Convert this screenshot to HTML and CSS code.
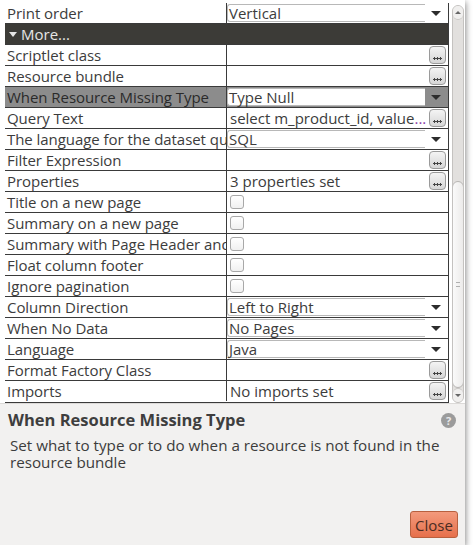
FILE: index.html
```html
<!DOCTYPE html>
<html>
<head>
<meta charset="utf-8">
<link rel="stylesheet" href="styles.css">
</head>
<body>
<div class="window">
  <div class="top">
    <div class="grid">
      <div class="row"><div class="label">Print order</div><div class="value combo"><div class="box">Vertical</div><div class="arrow"></div></div></div>
      <div class="row section"><div class="sec-label"><span class="tri"></span>More...</div></div>
      <div class="row"><div class="label">Scriptlet class</div><div class="value"><div class="text"></div><div class="dots"><svg width="9" height="4" viewBox="0 0 9 4"><path d="M0 2.5H9M1.5 1V4M4.5 1V4M7.5 1V4" stroke="#444" stroke-width="1"/></svg></div></div></div>
      <div class="row"><div class="label">Resource bundle</div><div class="value"><div class="text"></div><div class="dots"><svg width="9" height="4" viewBox="0 0 9 4"><path d="M0 2.5H9M1.5 1V4M4.5 1V4M7.5 1V4" stroke="#444" stroke-width="1"/></svg></div></div></div>
      <div class="row selected"><div class="label">When Resource Missing Type</div><div class="value combo"><div class="box">Type Null</div><div class="arrow"></div></div></div>
      <div class="row"><div class="label">Query Text</div><div class="value"><div class="text">select m_product_id, value<span class="ell">...</span></div><div class="dots"><svg width="9" height="4" viewBox="0 0 9 4"><path d="M0 2.5H9M1.5 1V4M4.5 1V4M7.5 1V4" stroke="#444" stroke-width="1"/></svg></div></div></div>
      <div class="row"><div class="label">The language for the dataset query</div><div class="value combo"><div class="box">SQL</div><div class="arrow"></div></div></div>
      <div class="row"><div class="label">Filter Expression</div><div class="value"><div class="text"></div><div class="dots"><svg width="9" height="4" viewBox="0 0 9 4"><path d="M0 2.5H9M1.5 1V4M4.5 1V4M7.5 1V4" stroke="#444" stroke-width="1"/></svg></div></div></div>
      <div class="row"><div class="label">Properties</div><div class="value"><div class="text">3 properties set</div><div class="dots"><svg width="9" height="4" viewBox="0 0 9 4"><path d="M0 2.5H9M1.5 1V4M4.5 1V4M7.5 1V4" stroke="#444" stroke-width="1"/></svg></div></div></div>
      <div class="row"><div class="label">Title on a new page</div><div class="value"><span class="check"></span></div></div>
      <div class="row"><div class="label">Summary on a new page</div><div class="value"><span class="check"></span></div></div>
      <div class="row"><div class="label">Summary with Page Header and Footer</div><div class="value"><span class="check"></span></div></div>
      <div class="row"><div class="label">Float column footer</div><div class="value"><span class="check"></span></div></div>
      <div class="row"><div class="label">Ignore pagination</div><div class="value"><span class="check"></span></div></div>
      <div class="row"><div class="label">Column Direction</div><div class="value combo"><div class="box">Left to Right</div><div class="arrow"></div></div></div>
      <div class="row"><div class="label">When No Data</div><div class="value combo"><div class="box">No Pages</div><div class="arrow"></div></div></div>
      <div class="row"><div class="label">Language</div><div class="value combo"><div class="box">Java</div><div class="arrow"></div></div></div>
      <div class="row"><div class="label">Format Factory Class</div><div class="value"><div class="text"></div><div class="dots"><svg width="9" height="4" viewBox="0 0 9 4"><path d="M0 2.5H9M1.5 1V4M4.5 1V4M7.5 1V4" stroke="#444" stroke-width="1"/></svg></div></div></div>
      <div class="row"><div class="label">Imports</div><div class="value"><div class="text">No imports set</div><div class="dots"><svg width="9" height="4" viewBox="0 0 9 4"><path d="M0 2.5H9M1.5 1V4M4.5 1V4M7.5 1V4" stroke="#444" stroke-width="1"/></svg></div></div></div>
    </div>
    <div class="scrollbar">
      <div class="sb-btn up"><span class="sb-tri-up"></span></div>
      <div class="sb-track">
        <div class="sb-thumb"><span class="grip"></span></div>
      </div>
      <div class="sb-btn down"><span class="sb-tri-down"></span></div>
    </div>
  </div>
  <div class="help">
    <div class="help-head">
      <div class="help-title">When Resource Missing Type</div>
      <div class="help-icon">?</div>
    </div>
    <div class="help-text">Set what to type or to do when a resource is not found in the resource bundle</div>
    <div class="footer"><button class="close">Close</button></div>
  </div>
</div>
</body>
</html>
```

FILE: styles.css
```css
* { box-sizing: border-box; }
body {
  margin: 0;
  background: #ffffff;
  font-family: "Open Sans", "DejaVu Sans", sans-serif;
  color: #3c3c3c;
}
.window {
  width: 465px;
  height: 545px;
  background: #f2f1f0;
  box-shadow: 1px 2px 6px rgba(0,0,0,0.45);
  display: flex;
  flex-direction: column;
}
.top {
  display: flex;
  padding-top: 3px;
  background: #ffffff;
}
.grid {
  width: 444px;
  margin-left: 5px;
  border-right: 1px solid #3a3a3a;
  border-bottom: 1px solid #3a3a3a;
  display: flex;
  flex-direction: column;
  background: #fff;
}
.row {
  display: flex;
  height: 21px;
  border-bottom: 1px solid #3a3a3a;
  font-size: 15px;
  line-height: 21px;
}
.row:last-child { border-bottom: none; height: 20px; }
.label {
  width: 222px;
  flex: none;
  padding-left: 2px;
  border-right: 1px solid #3a3a3a;
  white-space: nowrap;
  overflow: hidden;
  letter-spacing: -0.05px;
}
.value {
  flex: 1;
  display: flex;
  align-items: center;
  min-width: 0;
}
.text {
  flex: 1;
  padding-left: 3px;
  white-space: nowrap;
  overflow: hidden;
}
.ell { color: #8a3aa8; }
.dots {
  width: 17px;
  height: 18px;
  margin-right: 2px;
  border: 1px solid #9a9a9a;
  border-radius: 4px;
  background: linear-gradient(#f4f4f4, #d6d6d6);
  display: flex;
  align-items: flex-end;
  justify-content: center;
  padding-bottom: 3px;
}
.dots svg { display: block; }
.combo .box {
  flex: 1;
  height: 18px;
  line-height: 17px;
  margin-top: -1px;
  border: 1px solid #b8b8b8;
  border-right: none;
  border-radius: 3px 0 0 3px;
  background: #fff;
  padding-left: 1px;
  white-space: nowrap;
}
.combo .arrow {
  width: 23px;
  height: 100%;
  position: relative;
}
.combo .arrow::after {
  content: "";
  position: absolute;
  left: 6px;
  top: 8px;
  border-left: 5px solid transparent;
  border-right: 5px solid transparent;
  border-top: 5px solid #2c2c2c;
}
.section {
  background: #3c3b37;
  color: #e6e6e6;
}
.sec-label {
  padding-left: 4px;
  display: flex;
  align-items: center;
}
.tri {
  display: inline-block;
  width: 0; height: 0;
  border-left: 4px solid transparent;
  border-right: 4px solid transparent;
  border-top: 5px solid #e6e6e6;
  margin-right: 4px;
}
.selected { background: #8c8c8c; }
.selected .label { color: #2a2a2a; }
.check {
  width: 14px;
  height: 14px;
  margin-left: 3px;
  border: 1px solid #a8a8a8;
  border-radius: 3px;
  background: linear-gradient(#ffffff, #f0f0f0);
}
.scrollbar {
  width: 12px;
  margin-left: 3px;
  margin-top: 2px;
  height: 398px;
  border: 1px solid #c4c2c0;
  border-radius: 6px;
  background: #e4e2e0;
  display: flex;
  flex-direction: column;
  overflow: hidden;
}
.sb-btn {
  height: 14px;
  background: #f0efee;
  display: flex;
  align-items: center;
  justify-content: center;
  flex: none;
}
.sb-btn.up { border-bottom: 1px solid #c8c6c4; border-radius: 0 0 6px 6px; }
.sb-btn.down { border-top: 1px solid #c8c6c4; border-radius: 6px 6px 0 0; }
.sb-tri-up {
  border-left: 3px solid transparent;
  border-right: 3px solid transparent;
  border-bottom: 3px solid #666;
}
.sb-tri-down {
  border-left: 3px solid transparent;
  border-right: 3px solid transparent;
  border-top: 3px solid #666;
}
.sb-track {
  flex: 1;
  display: flex;
  flex-direction: column;
  justify-content: flex-end;
  background: #e2e0de;
}
.sb-thumb {
  height: 207px;
  border: 1px solid #b8b6b4;
  border-radius: 6px;
  background: linear-gradient(90deg, #fafafa, #ecebea);
  margin: 0 -1px;
  display: flex;
  align-items: center;
  justify-content: center;
}
.grip {
  width: 4px;
  height: 5px;
  border-top: 1px solid #b0b0b0;
  border-bottom: 1px solid #b0b0b0;
  position: relative;
}
.help {
  flex: 1;
  display: flex;
  flex-direction: column;
  padding: 0 7px 7px 8px;
  border-top: 1px solid #dcdad8;
}
.help-head {
  display: flex;
  justify-content: space-between;
  align-items: flex-start;
  margin-top: 6px;
}
.help-title {
  font-weight: bold;
  font-size: 16.5px;
  line-height: 20px;
  color: #3e3e3e;
}
.help-icon {
  width: 15px;
  height: 15px;
  border-radius: 50%;
  background: #9b9b9b;
  color: #e8e8e8;
  font-size: 11px;
  font-weight: bold;
  line-height: 15px;
  text-align: center;
  margin-top: 3px;
  margin-right: 2px;
  box-shadow: 0 10px 0 -9px #dcdcdc;
}
.help-text {
  font-size: 15.2px;
  line-height: 17px;
  margin-top: 7px;
  padding-left: 2px;
  color: #3c3c3c;
}
.footer {
  margin-top: auto;
  display: flex;
  justify-content: flex-end;
}
.close {
  width: 48px;
  height: 27px;
  border: 1px solid #b8603f;
  border-radius: 3px;
  background: linear-gradient(#f39a7c, #e6704c);
  font-family: inherit;
  font-size: 15px;
  color: #4a2c22;
  padding: 0;
}
```
